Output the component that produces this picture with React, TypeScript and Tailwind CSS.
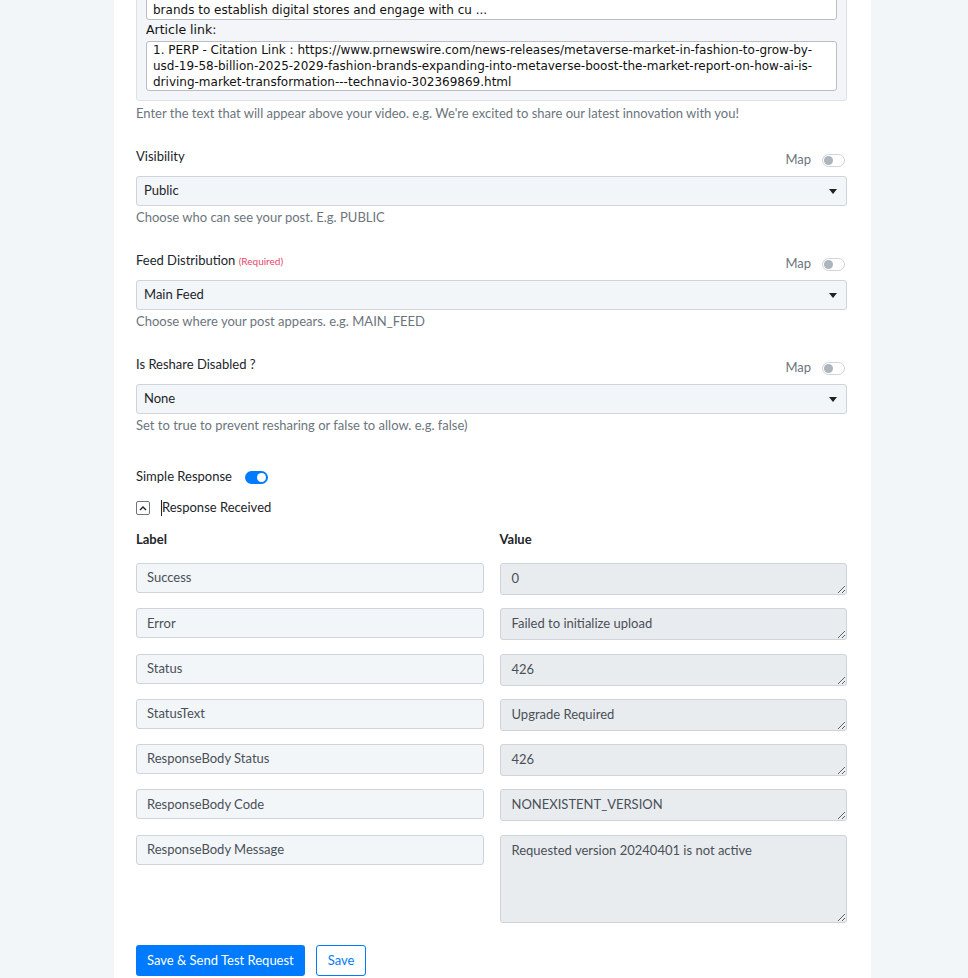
import React from 'react';

const ui = { fontFamily: 'Lato, "Noto Sans", sans-serif' };
const mono = { fontFamily: '"DejaVu Sans", Verdana, sans-serif' };

const MapSwitch: React.FC = () => (
  <div className="flex items-center gap-[11px] mt-[6px] mr-[2px]">
    <span className="text-[13px] text-[#6c757d]">Map</span>
    <span className="w-[23px] h-[13px] rounded-full border border-[#ced4da] bg-white flex items-center px-[1px]">
      <span className="w-[9px] h-[9px] rounded-full bg-[#adb5bd]" />
    </span>
  </div>
);

const SelectField: React.FC<{ label: React.ReactNode; value: string; help: string }> = ({ label, value, help }) => (
  <div className="mt-[25px]">
    <div className="flex items-center justify-between h-[20px]">
      <div className="text-[13px] text-[#212529]">{label}</div>
      <MapSwitch />
    </div>
    <div className="mt-[9px] h-[30px] rounded-[3px] border border-[#ced4da] bg-[#f3f6f9] flex items-center justify-between pl-[7px] pr-[9px]">
      <span className="text-[13px] text-[#212529]">{value}</span>
      <svg width="8" height="5" viewBox="0 0 8 5"><path d="M0 0h8L4 5z" fill="#222" /></svg>
    </div>
    <div className="mt-[2px] leading-[18px] text-[13px] text-[#6c757d]">{help}</div>
  </div>
);

const rows: [string, string, number][] = [
  ['Success', '0', 32],
  ['Error', 'Failed to initialize upload', 32],
  ['Status', '426', 32],
  ['StatusText', 'Upgrade Required', 32],
  ['ResponseBody Status', '426', 32],
  ['ResponseBody Code', 'NONEXISTENT_VERSION', 32],
  ['ResponseBody Message', 'Requested version 20240401 is not active', 88],
];

const App: React.FC = () => {
  return (
    <div className="h-[978px] overflow-hidden bg-[#f3f6f9]" style={ui}>
      <div className="flow-root ml-[114px] w-[757px] h-full bg-white pl-[22px] pr-[24px]">
        {/* message box, scrolled partly out of view */}
        <div className="-mt-[40px] rounded-[3px] border border-[#dee2e6] bg-[#f3f5f8] px-[9px] pt-[9px] pb-[9px]" style={mono}>
          <div className="h-[50px] rounded-[3px] border border-[#b9bec4] bg-white flex flex-col justify-end px-[6px] pb-[1px] text-[12px] leading-[16px] text-[#111]">
            <span>brands to establish digital stores and engage with cu ...</span>
          </div>
          <div className="mt-[1px] text-[12.5px] leading-[18px] text-[#111]">Article link:</div>
          <div className="mt-[2px] h-[50px] rounded-[3px] border border-[#b9bec4] bg-white px-[6px] text-[12px] leading-[16px] text-[#111] whitespace-nowrap overflow-hidden">
            <span className="block">1. PERP - Citation Link : https://www.prnewswire.com/news-releases/metaverse-market-in-fashion-to-grow-by-</span>
            <span className="block">usd-19-58-billion-2025-2029-fashion-brands-expanding-into-metaverse-boost-the-market-report-on-how-ai-is-</span>
            <span className="block">driving-market-transformation---technavio-302369869.html</span>
          </div>
        </div>
        <div className="mt-[3px] leading-[18px] text-[13px] text-[#6c757d]">
          Enter the text that will appear above your video. e.g. We're excited to share our latest innovation with you!
        </div>

        <SelectField label="Visibility" value="Public" help="Choose who can see your post. E.g. PUBLIC" />
        <SelectField
          label={<>Feed Distribution <span className="text-[10px] text-[#e8436d]">(Required)</span></>}
          value="Main Feed"
          help="Choose where your post appears. e.g. MAIN_FEED"
        />
        <SelectField label="Is Reshare Disabled ?" value="None" help="Set to true to prevent resharing or false to allow. e.g. false)" />

        <div className="mt-[33px] h-[20px] flex items-center gap-[13px]">
          <span className="text-[13px] text-[#212529]">Simple Response</span>
          <span className="w-[23px] h-[13px] rounded-full bg-[#007bff] flex items-center justify-end px-[2px]">
            <span className="w-[9px] h-[9px] rounded-full bg-white" />
          </span>
        </div>

        <div className="mt-[11px] h-[20px] flex items-center">
          <span className="w-[14px] h-[14px] rounded-[2px] border border-[#6c757d] flex items-center justify-center">
            <svg width="8" height="5" viewBox="0 0 8 5" fill="none"><path d="M1 4l3-3 3 3" stroke="#222" strokeWidth="1.4" /></svg>
          </span>
          <span className="ml-[11px] w-px h-[16px] bg-[#222]" />
          <span className="text-[13px] text-[#212529]">Response Received</span>
        </div>

        <div className="mt-[12px] h-[20px] grid grid-cols-2 gap-x-4 items-center text-[13px] font-bold text-[#212529]">
          <span>Label</span>
          <span>Value</span>
        </div>

        <div className="mt-[13px] flex flex-col gap-[13.3px]">
          {rows.map(([label, value, h]) => (
            <div key={label} className="grid grid-cols-2 gap-x-4 items-start">
              <div className="h-[30px] rounded-[3px] border border-[#ced4da] bg-[#f3f6f9] flex items-center px-[10px] text-[13px] text-[#495057]">
                {label}
              </div>
              <textarea
                readOnly
                value={value}
                style={{ height: h, ...ui }}
                className="w-full block rounded-[3px] border border-[#ced4da] bg-[#e9ecef] px-[11px] pt-[5px] text-[13px] leading-[18px] text-[#495057] outline-none"
              />
            </div>
          ))}
        </div>

        <div className="mt-[22px] flex gap-[11px]">
          <button className="h-[31px] px-[11px] rounded-[3px] bg-[#007bff] text-white text-[13px]">Save &amp; Send Test Request</button>
          <button className="h-[31px] px-[11px] rounded-[3px] border border-[#007bff] bg-white text-[#007bff] text-[13px]">Save</button>
        </div>
      </div>
    </div>
  );
};

export default App;
